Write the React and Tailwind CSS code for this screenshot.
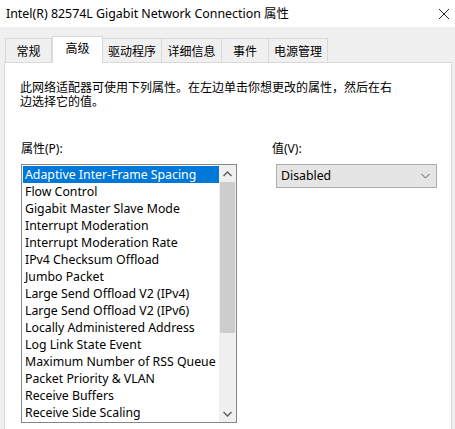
import React from "react";

const items = [
  "Adaptive Inter-Frame Spacing",
  "Flow Control",
  "Gigabit Master Slave Mode",
  "Interrupt Moderation",
  "Interrupt Moderation Rate",
  "IPv4 Checksum Offload",
  "Jumbo Packet",
  "Large Send Offload V2 (IPv4)",
  "Large Send Offload V2 (IPv6)",
  "Locally Administered Address",
  "Log Link State Event",
  "Maximum Number of RSS Queue",
  "Packet Priority & VLAN",
  "Receive Buffers",
  "Receive Side Scaling",
];

const tabs = [
  { label: "常规", w: "w-[47px]" },
  { label: "高级", w: "w-[51px]", active: true },
  { label: "驱动程序", w: "w-[59px]" },
  { label: "详细信息", w: "w-[60px]" },
  { label: "事件", w: "w-[47px]" },
  { label: "电源管理", w: "w-[59px]" },
];

export default function App() {
  return (
    <div
      className="w-[455px] h-[429px] overflow-hidden bg-[#f0f0f0] text-[12px] text-black"
      style={{ fontFamily: '"Noto Sans", "Noto Sans CJK SC", sans-serif' }}
    >
      {/* title bar */}
      <div className="h-[27px] bg-white flex items-center justify-between pl-[6px] pr-[5px]">
        <span className="leading-[14px] text-[12.4px]">Intel(R) 82574L Gigabit Network Connection 属性</span>
        <svg width="12" height="12" viewBox="0 0 12 12">
          <path d="M1 1 L11 11 M11 1 L1 11" stroke="#222" strokeWidth="1" />
        </svg>
      </div>

      {/* tabs */}
      <div className="flex items-end pl-[5px] pt-[8px] h-[35px] relative z-10">
        {tabs.map((t) =>
          t.active ? (
            <div
              key={t.label}
              className={`${t.w} h-[27px] -mb-[1px] bg-white border border-b-0 border-[#d9d9d9] flex items-start justify-center pt-[5px] leading-[14px]`}
            >
              {t.label}
            </div>
          ) : (
            <div
              key={t.label}
              className={`${t.w} h-[24px] border border-b-0 border-l-0 first:border-l border-[#d9d9d9] flex items-center justify-center leading-[14px] pt-[2px]`}
            >
              {t.label}
            </div>
          )
        )}
      </div>

      {/* panel */}
      <div className="ml-[4px] w-[448px] h-[400px] bg-white border border-[#d9d9d9] pl-[15px] pt-[18px]">
        <p className="leading-[14px] w-[380px]">
          此网络适配器可使用下列属性。在左边单击你想更改的属性，然后在右边选择它的值。
        </p>

        <div className="flex mt-[33px]">
          <div className="w-[216px] ml-[1px]">
            <div className="leading-[14px] mb-[8px]">属性(P):</div>
            <div className="h-[259px] border border-[#828790] flex p-[1px] pr-0">
              <div className="flex-1 flex flex-col text-[12.3px]">
                {items.map((it, i) => (
                  <div
                    key={it}
                    className={`h-[17px] leading-[17px] pl-[2px] whitespace-nowrap overflow-hidden ${
                      i === 0 ? "bg-[#0078d7] text-white" : ""
                    }`}
                  >
                    {it}
                  </div>
                ))}
              </div>
              <div className="w-[17px] bg-[#f0f0f0] flex flex-col -mt-[1px] -mb-[1px]">
                <div className="h-[17px] flex items-center justify-center">
                  <svg width="9" height="6" viewBox="0 0 9 6">
                    <path d="M0.5 5 L4.5 1 L8.5 5" stroke="#606060" strokeWidth="1.5" fill="none" />
                  </svg>
                </div>
                <div className="h-[151px] mx-[1px] bg-[#cdcdcd]" />
                <div className="flex-1" />
                <div className="h-[17px] flex items-center justify-center">
                  <svg width="9" height="6" viewBox="0 0 9 6">
                    <path d="M0.5 1 L4.5 5 L8.5 1" stroke="#606060" strokeWidth="1.5" fill="none" />
                  </svg>
                </div>
              </div>
            </div>
          </div>

          <div className="ml-[35px]">
            <div className="leading-[14px] mb-[8px]">值(V):</div>
            <div className="ml-[4px] w-[161px] h-[24px] bg-[#e5e5e5] border border-[#adadad] flex items-center justify-between pl-[4px] pr-[6px]">
              <span className="leading-[14px] text-[12.3px]">Disabled</span>
              <svg width="9" height="6" viewBox="0 0 9 6">
                <path d="M0.5 1 L4.5 5 L8.5 1" stroke="#555" strokeWidth="1" fill="none" />
              </svg>
            </div>
          </div>
        </div>
      </div>
    </div>
  );
}
